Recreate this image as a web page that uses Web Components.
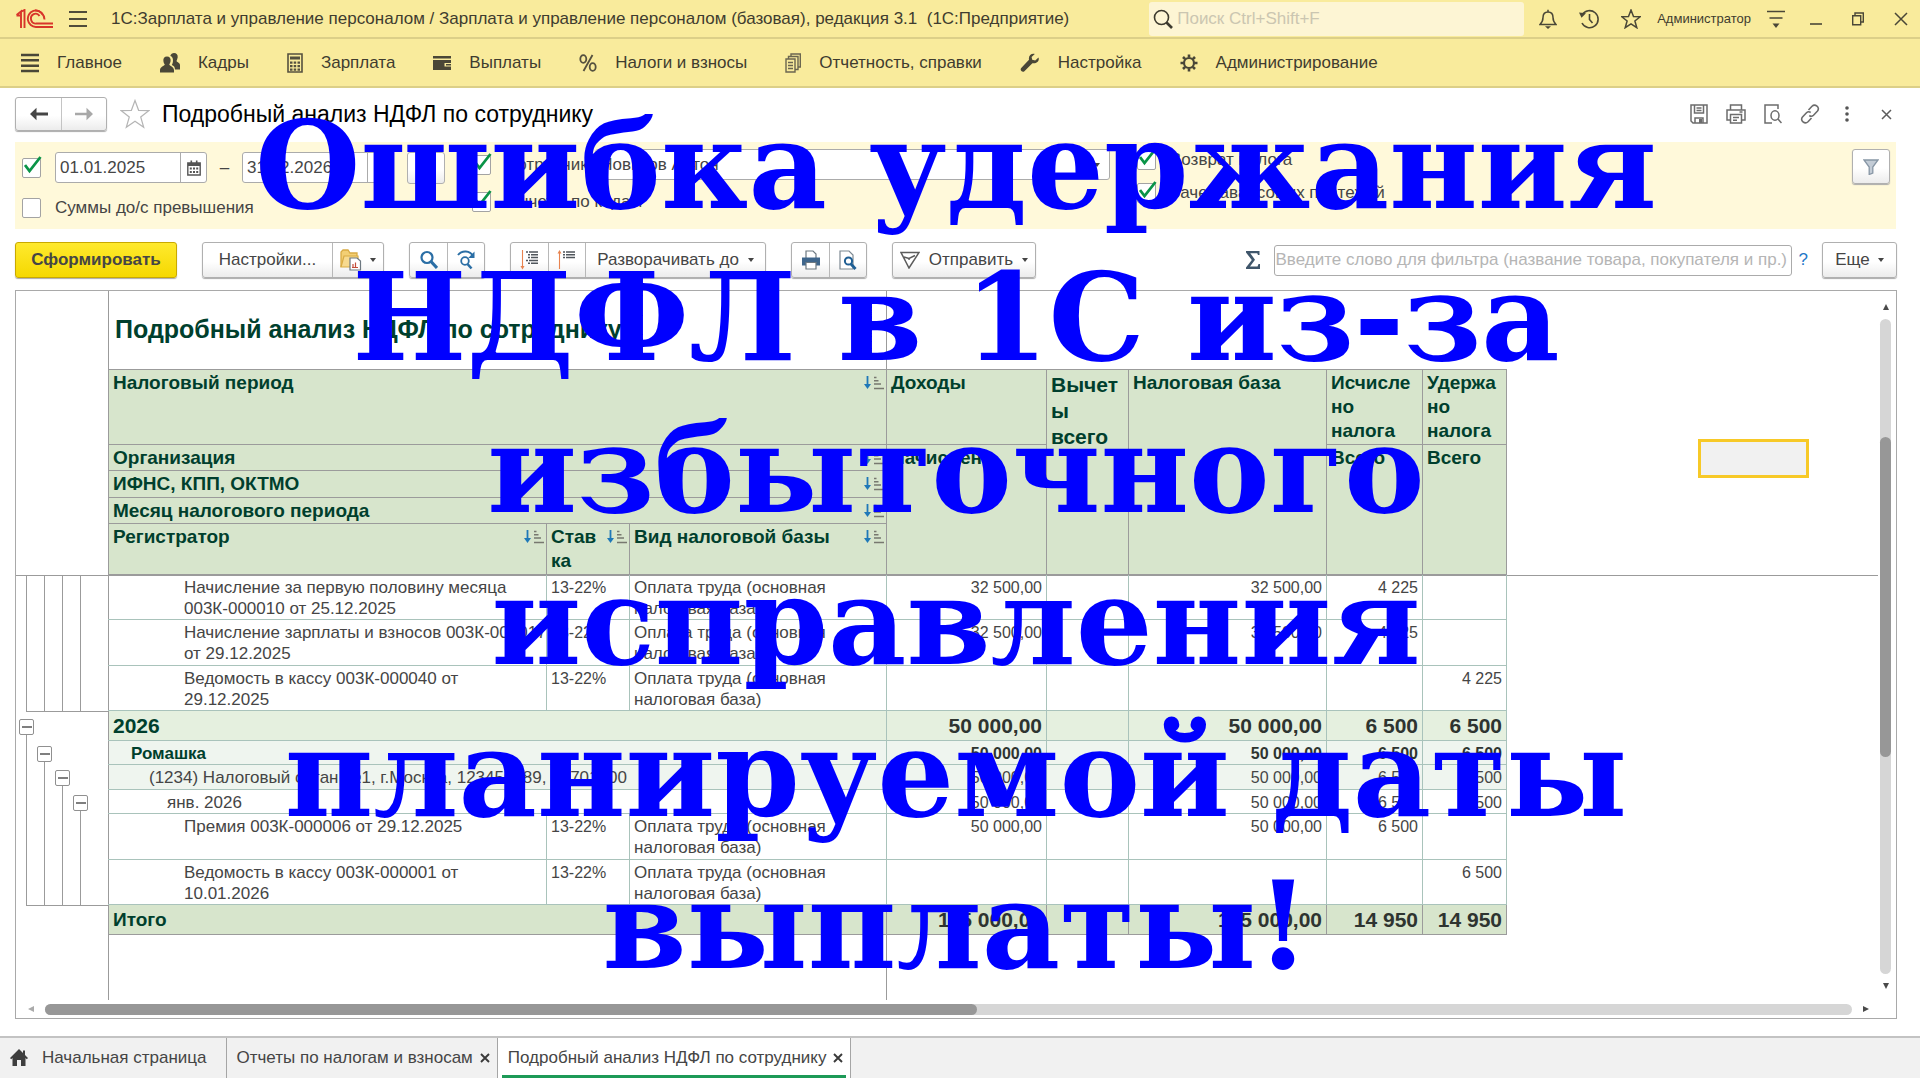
<!DOCTYPE html>
<html lang="ru">
<head>
<meta charset="utf-8">
<title>Зарплата и управление персоналом</title>
<style>
html,body{margin:0;height:100%}
body{font:17px/20px "Liberation Sans",Arial,sans-serif;color:#454545;background:#fff}
</style>
</head>
<body>
<payroll-app></payroll-app>
<script>
const ICONS={
logo:[38,20,'<g fill="none" stroke="#d8352a" stroke-width="1.900"><path d="M.5 6l4.500-3.500v16.500M4 6.500h-3.500M8.500 19V1L4.500 3"/><path d="M27 6A8 8.300 0 1 0 20 18H37"/><path d="M23.500 7A4.600 5 0 1 0 20.500 14.500H37"/><path d="M28.500 10.500A9 9.500 0 0 0 19 1.500"/></g>'],
burger:[18,18,'<path d="M0 2h18M0 9h18M0 16h18" stroke="#504c3a" stroke-width="1.800"/>'],
list:[18,20,'<path d="M0 2h18M0 7.300h18M0 12.700h18M0 18h18" stroke="#4a4737" stroke-width="2.500"/>'],
people:[20,20,'<g fill="#4a4737"><path d="M14 0c2.500 0 4 1.800 3.700 4.300-.2 1.500-.8 2.600-1.200 3.700 0 1 3.500 1.600 3.500 4v4.500h-5c-.2-2.500-1-3.700-3.200-4.500 1.200-1.800 1.400-4.400 1-6.300-.3-1.500-1.200-2.400-2.500-2.700C10.700 1.100 12.400 0 14 0z"/><path d="M7 3.500c2.600 0 4 2 3.600 4.500-.2 1.500-.9 2.500-1.300 3.500.2 1.500 4.700 2.200 4.700 5.500v2.500H0V17c0-3.300 4.500-4 4.800-5.500C4 10.500 3.600 9.500 3.400 8 3 5.500 4.400 3.500 7 3.500z"/></g>'],
calc:[16,20,'<path d="M1 1h14v18H1z" fill="none" stroke="#55513f" stroke-width="1.600"/><path d="M3 3.500h10v3H3zM3 8.500h2.500v2.200H3zm3.700 0h2.500v2.200H6.700zm3.800 0H13v2.200h-2.500zM3 12h2.500v2.200H3zm3.700 0h2.500v2.200H6.700zm3.800 0H13v2.200h-2.500zM3 15.500h2.500v2.200H3zm3.700 0h2.500v2.200H6.700zm3.800 0H13v2.200h-2.500z" fill="#55513f"/>'],
wallet:[18,16,'<path d="M0 1h18v2.500H0zM0 5h18v3h-6.500v3.500H18V15H0z" fill="#4a4737"/><path d="M13 9h5v1.500h-5z" fill="#4a4737"/>'],
percent:[18,18,'<g fill="none" stroke="#55513f" stroke-width="1.800"><ellipse cx="4.300" cy="5" rx="3" ry="3.800"/><ellipse cx="13.700" cy="13" rx="3" ry="3.800"/><path d="M13.500 1L4.500 17"/></g>'],
docs:[16,20,'<g fill="none" stroke="#6b6650" stroke-width="1.400"><path d="M1 6h9v13H1z"/><path d="M3.500 6V3.500H13v13h-3"/><path d="M6 3.500V1h9.300v13H13M3 9.500h5M3 12.500h5M3 15.500h5"/></g>'],
wrench:[20,20,'<path d="M18.500 4.500l-3.300 3-3-.8-.6-2.800 3.200-3C11.500-.1 8.200 2.600 9 6.700L1.200 15c-1.800 2 1.200 5 3.200 3.200l8-8c4 .9 7.400-1.900 6.100-5.700z" fill="#4a4737"/>'],
gear:[18,20,'<g fill="none" stroke="#4a4737"><circle cx="9" cy="10" r="5" stroke-width="2.200"/><path d="M9 1.500v3M9 15.500v3M.5 10h3M14.500 10h3M3 4l2.200 2.200M12.800 13.800L15 16M15 4l-2.200 2.200M5.200 13.800L3 16" stroke-width="2.600"/></g>'],
search:[20,20,'<g fill="none" stroke="#3d3a2e"><circle cx="8.500" cy="8.500" r="7" stroke-width="1.600"/><path d="M13.500 13.500l5.500 5.500" stroke-width="2.600"/></g>'],
bell:[18,20,'<path d="M1 15.500c2-2 3-3.500 3-7C4 5 6 3 9 3s5 2 5 5.500c0 3.500 1 5 3 7zM9 3V.8" fill="none" stroke="#4a4737" stroke-width="1.500"/><path d="M6 17.200h6L9 20z" fill="#4a4737"/>'],
history:[20,20,'<g fill="none" stroke="#4a4737" stroke-width="1.600"><path d="M3.200 6A8.500 8.500 0 1 1 3 14M10.500 5v5.500l3 3.500"/></g><path d="M0 3.500l7 .8-4.500 4.500z" fill="#4a4737"/>'],
star:[20,20,'<path d="M10 1l2.500 6.500 6.700.3-5.300 4.200 1.900 6.700L10 14.900l-5.800 3.800L6.100 12 .8 7.800l6.700-.3z" fill="none" stroke="#4a4737" stroke-width="1.500"/>'],
starbig:[30,30,'<path d="M15 1.500l3.600 9.800 10.400.3-8.300 6.400 3 10.300L15 22.300l-8.700 6 3-10.300L1 11.600l10.400-.3z" fill="#fff" stroke="#b5b5b5" stroke-width="1.200"/>'],
usermenu:[18,18,'<path d="M0 1.500h18M2.500 8h13" stroke="#4a4737" stroke-width="1.700"/><path d="M5.500 13.500h7L9 18z" fill="#4a4737"/>'],
min:[12,16,'<path d="M0 13h12" stroke="#4a4737" stroke-width="1.600"/>'],
restore:[12,14,'<path d="M.7 3.700h8v9h-8zM3 3.500V1h8.300v9H9" fill="none" stroke="#4a4737" stroke-width="1.400"/>'],
close:[14,14,'<path d="M1 1l12 12M13 1L1 13" stroke="#4a4737" stroke-width="1.500"/>'],
closes:[11,11,'<path d="M1 1l9 9M10 1l-9 9" stroke="#5c5c5c" stroke-width="1.500"/>'],
closet:[10,12,'<path d="M1 2l8 8M9 2l-8 8" stroke="#3a3a3a" stroke-width="1.900"/>'],
back:[18,14,'<path d="M0 7l6.500-6.200v4.700H18v3H6.500v4.700z" fill="#454545"/>'],
fwd:[18,14,'<path d="M18 7L11.500.8v4.900H0v2.600h11.500v4.900z" fill="#a8a8a8"/>'],
save:[18,20,'<g fill="none" stroke="#6c6c6c" stroke-width="1.500"><path d="M1 1h16v18H3l-2-2z"/><path d="M4.500 1v8h9V1M5 19v-5h8v5M6.500 4h5M6.500 6.500h5"/></g><path d="M9 15h3v4H9z" fill="#6c6c6c"/>'],
print:[20,20,'<g fill="none" stroke="#6c6c6c" stroke-width="1.500"><path d="M4.500 6V1h11v5M4.500 16H1V6h18v10h-3.500"/><path d="M4.500 10.500h11V19h-11zM7 13.500h6M7 16.200h4M13.500 8h3"/></g>'],
preview:[18,20,'<g fill="none" stroke="#6c6c6c" stroke-width="1.500"><path d="M8 19H1V1h13v4"/><ellipse cx="11" cy="11.500" rx="4" ry="4.700"/><path d="M14 15l3.500 4"/></g>'],
link:[20,20,'<g fill="none" stroke="#6c6c6c" stroke-width="1.600"><path d="M8.500 6l3.500-3.700c3-3 8.500 1 5.500 4.700l-4 4.200c-1.200 1.200-3 1.200-4.200.3M11.500 14L8 17.700c-3 3-8.500-1-5.500-4.700l4-4.200c1.200-1.200 3-1.200 4.200-.3"/></g>'],
dots:[4,18,'<g fill="#555"><circle cx="2" cy="3" r="1.800"/><circle cx="2" cy="9" r="1.800"/><circle cx="2" cy="15" r="1.800"/></g>'],
cal:[14,16,'<path d="M.8 3h12.400v12H.8z" fill="none" stroke="#555" stroke-width="1.400"/><path d="M1 3h12v3H1zM3.500.5h1.600V4H3.500zm5.400 0h1.600V4H8.900zM2.800 7.500h2v2h-2zm3.200 0h2v2H6zm3.200 0h2v2h-2zM2.800 11h2v2h-2zM6 11h2v2H6zm3.200 0h2v2h-2z" fill="#555"/>'],
tri:[6,4,'<path d="M0 0h6L3 4z" fill="#444"/>'],
funnel:[16,16,'<path d="M1 1h14L9.800 8v6l-3.600 1.500V8z" fill="#c3ccd6" stroke="#8796a5" stroke-width="1.300"/>'],
folder:[22,22,'<path d="M1 18V3l2-2h5l2 3h7v3" fill="#f3cf74" stroke="#d9ab43" stroke-width="1.300"/><path d="M1 18L4 7h14v11z" fill="#f7da8f" stroke="#d9ab43" stroke-width="1.200"/><path d="M10 9h7l3.500 3v9H10z" fill="#fff" stroke="#6d7880" stroke-width="1.200"/><path d="M13 18v-3M15.500 18v-4.500M12 18.500h6" stroke="#c34d3a" stroke-width="1.200"/>'],
find:[18,20,'<g fill="none" stroke="#2a6ea5"><circle cx="7" cy="7.500" r="5.500" stroke-width="2.200"/><path d="M11 11.500l6 6.500" stroke-width="3.200"/></g>'],
findnext:[20,20,'<g fill="none" stroke="#2a6ea5"><path d="M2 5c4-5 12-4.500 15 1" stroke-width="2"/><circle cx="9" cy="11" r="3.800" stroke-width="1.800"/><path d="M11.500 14l4 4.500" stroke-width="2.600"/></g><path d="M18.500 1.500V8h-6.300z" fill="#2a6ea5"/>'],
expand:[20,20,'<path d="M2.500 0v17" stroke="#e8834f" stroke-width="1.100"/><path d="M.5 16h4l-2 3.500z" fill="#e8834f"/><path d="M6 2h2M9 2h9M8 4.800h2M11 4.800h7M8 7.600h2M11 7.600h7M6 10.400h2M9 10.400h9M8 13.200h2M11 13.200h7" stroke="#50565c" stroke-width="1.500"/>'],
collapse:[20,20,'<path d="M2.500 2v17" stroke="#e8834f" stroke-width="1.100"/><path d="M.5 3.500h4L2.500 0z" fill="#e8834f"/><path d="M6 2h2M9 2h9M6 4.800h2M9 4.800h9M6 7.600h2M9 7.600h9" stroke="#50565c" stroke-width="1.500"/>'],
printer:[20,20,'<path d="M5 8V1h7l3 3v4" fill="#fff" stroke="#6d7880" stroke-width="1.200"/><path d="M1 7.500h18v8H1z" fill="#3f668c"/><path d="M5 12.500h10V19H5z" fill="#fff" stroke="#6d7880" stroke-width="1.200"/>'],
pageview:[18,20,'<path d="M1 1h9l4 4v14H1z" fill="#fff" stroke="#7d8992" stroke-width="1.200"/><g fill="none" stroke="#1f5f94"><circle cx="9.500" cy="11" r="3.600" stroke-width="2"/><path d="M12 14l4.500 5" stroke-width="2.800"/></g>'],
send:[20,18,'<path d="M1 1.500h18L9 17zM4 6l5 1.500 6-3M9 7.500V9" fill="none" stroke="#5c5c5c" stroke-width="1.500"/>'],
sigma:[14,20,'<path d="M0 1h13.500v4H12l-.8-1.800H4.300L9 9.800 4 16.500h7.500L12.500 14H14v5H0v-1.600L5.800 10 0 2.500z" fill="#3f566b"/>'],
sort:[20,14,'<path d="M3.500 0v9" stroke="#1f78b8" stroke-width="1.800"/><path d="M0 8h7l-3.500 5z" fill="#1f78b8"/><path d="M10 1.500h2.500M10 4.700h4.500M10 8h7M10 12.500h10" stroke="#77786f" stroke-width="1.600"/>'],
home:[18,18,'<path d="M9 0L0 9l1.200 1.200L2.500 9v8H7v-6h4v6h4.500V9l1.300 1.200L18 9l-3-3V1.500h-2V4z" fill="#3e3e3e"/>'],
up:[6,6,'<path d="M0 6l3-6 3 6z" fill="#4a4a4a"/>'],
down:[6,6,'<path d="M0 0l3 6 3-6z" fill="#4a4a4a"/>'],
left:[6,6,'<path d="M6 0L0 3l6 3z" fill="#aaa"/>'],
right:[6,6,'<path d="M0 0l6 3-6 3z" fill="#4a4a4a"/>'],
minus:[10,2,'<path d="M0 1h10" stroke="#555" stroke-width="1.500"/>']
};
const RESET=`*{box-sizing:border-box}button,input{font:inherit;color:inherit;margin:0}button{cursor:pointer}a{color:inherit;text-decoration:none}`;
function define(name,css,html){
  const t=document.createElement('template');
  t.innerHTML=`<style>${RESET}${css}</style>${html}`;
  customElements.define(name,class extends HTMLElement{
    constructor(){super();this.attachShadow({mode:'open'}).append(t.content.cloneNode(true));}
  });
}
customElements.define('ui-icon',class extends HTMLElement{
  connectedCallback(){
    if(this.shadowRoot)return;
    const [w,h,body]=ICONS[this.getAttribute('name')];
    this.attachShadow({mode:'open'}).innerHTML=`<style>:host{display:inline-flex;flex:none}svg{display:block}</style><svg width="${w}" height="${h}" viewBox="0 0 ${w} ${h}" aria-hidden="true">${body}</svg>`;
  }
});
customElements.define('ui-check',class extends HTMLElement{
  connectedCallback(){
    if(this.shadowRoot)return;
    const on=this.hasAttribute('checked')?'checked':'';
    const name=this.getAttribute('name');
    this.attachShadow({mode:'open'}).innerHTML=`<style>${RESET}
    :host{display:inline-flex}
    label{display:flex;align-items:center;gap:14px;white-space:nowrap}
    .box{position:relative;display:flex;width:19px;height:20px}
    input{appearance:none;width:19px;height:20px;border:1px solid #a3a3a3;border-radius:2px;background:#fff}
    svg{position:absolute;left:2px;bottom:4px;pointer-events:none;display:none}
    input:checked+svg{display:block}</style>
    <label><span class="box"><input type="checkbox" ${on} ${name?`aria-label="${name}"`:''}><svg width="18" height="18" viewBox="0 0 18 18"><path d="M1 9l4.500 6L16.500 1" fill="none" stroke="#0a9447" stroke-width="2.800"/></svg></span><slot></slot></label>`;
  }
});
define('ui-group',`
:host{display:inline-flex;height:36px;flex:none;border:1px solid #b0b0b0;border-radius:3px;background:linear-gradient(#fff 55%,#ececec);box-shadow:0 1px 1px #aaa}
::slotted(button){border:0;background:none;padding:0 7px;font:inherit;color:inherit;display:flex;align-items:center;justify-content:center;gap:8px;min-width:37px;white-space:nowrap;cursor:pointer}
::slotted(button:not(:first-child)){border-left:1px solid #b8b8b8!important}
`,`<slot></slot>`);

define('title-bar',`
:host{display:flex;align-items:center;height:39px;padding:0 12px 0 16px;background:#f9eb9c;border-bottom:2px solid #dccf88;color:#3f3c2f}
.logo{margin-right:15px;display:flex}
.burger{margin-right:24px}
button{border:0;background:none;padding:0;display:flex}
h1{font:inherit;margin:0;white-space:pre;flex:1}
label{display:flex;align-items:center;gap:4px;width:375px;height:34px;padding:0 4px;background:#fdf5d4;border-radius:3px;margin-right:15px}
input{border:0;background:none;flex:1;min-width:0;padding:0;outline:0}
input::placeholder{color:#cbc6b1;opacity:1}
nav{display:flex;align-items:center;gap:22px}
.user{font-size:13px;margin:0 -6px}
.win{display:flex;align-items:center;gap:30px;margin-left:3px}
`,`<span class="logo"><ui-icon name="logo"></ui-icon></span><button class="burger" aria-label="Меню"><ui-icon name="burger"></ui-icon></button>
<h1>1С:Зарплата и управление персоналом / Зарплата и управление персоналом (базовая), редакция 3.1  (1С:Предприятие)</h1>
<label><ui-icon name="search"></ui-icon><input type="search" placeholder="Поиск Ctrl+Shift+F" aria-label="Поиск"></label>
<nav><button aria-label="Уведомления"><ui-icon name="bell"></ui-icon></button><button aria-label="История"><ui-icon name="history"></ui-icon></button><button aria-label="Избранное"><ui-icon name="star"></ui-icon></button><a class="user" href="#">Администратор</a><button aria-label="Сервис"><ui-icon name="usermenu"></ui-icon></button>
<span class="win"><button aria-label="Свернуть"><ui-icon name="min"></ui-icon></button><button aria-label="Развернуть"><ui-icon name="restore"></ui-icon></button><button aria-label="Закрыть"><ui-icon name="close"></ui-icon></button></span></nav>`);

const SECTIONS=[['list','Главное'],['people','Кадры'],['calc','Зарплата'],['wallet','Выплаты'],['percent','Налоги и взносы'],['docs','Отчетность, справки'],['wrench','Настройка'],['gear','Администрирование']];
define('section-menu',`
:host{display:block;background:#f9eb9c;border-bottom:2px solid #dccf88;color:#3f3c2f}
nav{display:flex;gap:38px;height:47px;padding:0 21px;align-items:center}
a{display:flex;align-items:center;gap:18px;white-space:nowrap}
`,`<nav>${SECTIONS.map(([i,t])=>`<a href="#"><ui-icon name="${i}"></ui-icon>${t}</a>`).join('')}</nav>`);

define('form-header',`
:host{display:flex;align-items:center;height:54px;padding:0 28px 2px 15px}
.nav{display:flex;height:34px;border:1px solid #b0b0b0;border-radius:3px;background:linear-gradient(#fff 55%,#ececec);box-shadow:0 1px 1px #aaa;margin-right:13px}
.nav button{width:45px;justify-content:center;align-items:center}
.nav button+button{border-left:1px solid #c4c4c4}
button{border:0;background:none;padding:0;display:flex}
h2{font-size:23px;line-height:26px;font-weight:400;color:#000;margin:0 auto 0 12px}
.tools{display:flex;align-items:center;gap:18px}
.tools .d{margin:0 7px}
.tools .x{margin-left:7px}
`,`<div class="nav"><button aria-label="Назад"><ui-icon name="back"></ui-icon></button><button aria-label="Вперед"><ui-icon name="fwd"></ui-icon></button></div>
<button aria-label="В избранное"><ui-icon name="starbig"></ui-icon></button>
<h2>Подробный анализ НДФЛ по сотруднику</h2>
<div class="tools"><button aria-label="Сохранить"><ui-icon name="save"></ui-icon></button><button aria-label="Печать"><ui-icon name="print"></ui-icon></button><button aria-label="Просмотр"><ui-icon name="preview"></ui-icon></button><button aria-label="Ссылка"><ui-icon name="link"></ui-icon></button><button class="d" aria-label="Еще"><ui-icon name="dots"></ui-icon></button><button class="x" aria-label="Закрыть"><ui-icon name="closes"></ui-icon></button></div>`);

define('filter-panel',`
:host{display:flex;align-items:flex-start;margin:0 24px 0 15px;padding:7px 6px 6px 7px;background:#fff9da}
.a{display:grid;gap:9px;padding-top:3px;width:450px}
.r{display:flex;align-items:center;height:31px}
.a ui-check.f{margin-right:14px}
.b{display:grid;gap:6px;width:638px;margin-right:27px}
.b .r{gap:3px}
.c{display:grid;gap:11px}
.c .r{height:22px}
.in{display:flex;height:31px;border:1px solid #ababab;border-radius:3px;background:#fff}
.in input{border:0;background:none;padding:0 4px;min-width:0;flex:1;outline:0}
.in button{border:0;border-left:1px solid #ababab;background:none;width:26px;padding:0;display:flex;align-items:center;justify-content:center}
.d{width:152px}.s{flex:1}
.dash{width:35px;text-align:center}
.dots{width:38px;height:32px;margin-left:13px;border:1px solid #b0b0b0;border-radius:3px;background:linear-gradient(#fff 55%,#ececec)}
.fun{margin-left:auto;width:38px;height:35px;border:1px solid #b0b0b0;border-radius:3px;background:linear-gradient(#fff 55%,#ececec);box-shadow:0 1px 1px #aaa;display:flex;align-items:center;justify-content:center;padding:0}
`,`<div class="a"><div class="r"><ui-check class="f" checked name="Период"></ui-check><span class="in d"><input type="text" value="01.01.2025" aria-label="Начало периода"><button aria-label="Календарь"><ui-icon name="cal"></ui-icon></button></span><span class="dash">–</span><span class="in d"><input type="text" value="31.12.2026" aria-label="Конец периода"><button aria-label="Календарь"><ui-icon name="cal"></ui-icon></button></span><button class="dots" aria-label="Выбрать период">...</button></div>
<div class="r"><ui-check>Суммы до/с превышения</ui-check></div></div>
<div class="b"><div class="r"><ui-check checked>Сотрудник:</ui-check><span class="in s"><input type="text" value="Новиков Антон" aria-label="Сотрудник"><button aria-label="Выбрать"><ui-icon name="tri"></ui-icon></button></span></div><div class="r"><ui-check checked>Вычеты по кодам</ui-check></div></div>
<div class="c"><div class="r"><ui-check checked>Возврат налога</ui-check></div><div class="r"><ui-check checked>Зачет авансовых платежей</ui-check></div></div>
<button class="fun" aria-label="Фильтр"><ui-icon name="funnel"></ui-icon></button>`);

define('report-toolbar',`
:host{display:flex;align-items:center;gap:25px;padding:13px 23px 12px 15px}
.go{height:36px;width:162px;flex:none;border:1px solid #c9a900;border-radius:3px;background:linear-gradient(#ffe92e,#f5d800);box-shadow:0 1px 1px #aaa;font-weight:700;padding:0}
.set{width:129px}
.exp{width:180px;gap:9px}
.send{width:142px;gap:9px}
.fill{flex:1}
.flt{display:flex;align-items:center;gap:14px;margin-right:-11px}
.flt input{width:518px;height:31px;border:1px solid #ababab;border-radius:3px;padding:0 1px;outline:0}
.flt input::placeholder{color:#b5b5b5;opacity:1}
.q{color:#1f78c8;margin-left:-7px}
.more{width:73px}
`,`<button class="go">Сформировать</button>
<ui-group><button class="set">Настройки...</button><button><ui-icon name="folder"></ui-icon><ui-icon name="tri"></ui-icon></button></ui-group>
<ui-group><button aria-label="Найти"><ui-icon name="find"></ui-icon></button><button aria-label="Найти далее"><ui-icon name="findnext"></ui-icon></button></ui-group>
<ui-group><button aria-label="Развернуть"><ui-icon name="expand"></ui-icon></button><button aria-label="Свернуть"><ui-icon name="collapse"></ui-icon></button><button class="exp">Разворачивать до<ui-icon name="tri"></ui-icon></button></ui-group>
<ui-group><button aria-label="Печать"><ui-icon name="printer"></ui-icon></button><button aria-label="Предварительный просмотр"><ui-icon name="pageview"></ui-icon></button></ui-group>
<ui-group><button class="send"><ui-icon name="send"></ui-icon>Отправить<ui-icon name="tri"></ui-icon></button></ui-group>
<span class="fill"></span>
<span class="flt"><ui-icon name="sigma"></ui-icon><input type="text" aria-label="Фильтр" placeholder="Введите слово для фильтра (название товара, покупателя и пр.)"><a class="q" href="#">?</a></span>
<ui-group><button class="more">Еще<ui-icon name="tri"></ui-icon></button></ui-group>`);

const S='<ui-icon class="s" name="sort"></ui-icon>';
const K='Оплата труда (основная налоговая база)';
const doc=(h,t,a,b,c,d)=>`<tr style="height:${h}px"><td class="k l4">${t}</td><td>13-22%</td><td class="k">${K}</td><td class="n">${a}</td><td></td><td class="n">${b}</td><td class="n">${c}</td><td class="n">${d}</td></tr>`;
const sum=(h,cls,lv,t,v)=>`<tr class="${cls}" style="height:${h}px"><td colspan="3" class="k ${lv}">${t}</td><td class="n">${v[0]}</td><td></td><td class="n">${v[0]}</td><td class="n">${v[1]}</td><td class="n">${v[2]}</td></tr>`;
const V=['50 000,00','6 500','6 500'];
const tree=(h,n,btn,end)=>`<div class="t${end?' end':''}${h==30?' big':''}" style="height:${h}px">${[0,1,2,3].map(i=>i===btn?'<span><button aria-label="Свернуть группу"><ui-icon name="minus"></ui-icon></button><i></i></span>':i<n?'<span class="v"></span>':'<span></span>').join('')}</div>`;
define('report-sheet',`
:host{display:grid;grid-template-columns:92px 1fr 18px;grid-template-rows:1fr 18px;flex:1;margin:0 23px 0 15px;border:1px solid #a9a9a9;min-height:0}
.gut{grid-area:1/1}
.gut .top{height:285px;border-bottom:1px solid #9b9b9b}
.t{display:grid;grid-template-columns:18px 18px 18px 27px;padding-left:10px}
.t.end{background:linear-gradient(#9b9b9b,#9b9b9b) 10px 100%/100% 1px no-repeat}
.t span{display:flex;flex-direction:column}
.t .v{border-left:1px solid #9b9b9b}
.t button{margin:4px 0 0 -7px;width:15px;height:16px;flex:none;border:1px solid #909090;border-radius:2px;background:#fff;padding:0;display:flex;align-items:center;justify-content:center}
.t.big button{margin-top:7px}
.t i{flex:1;border-left:1px solid #9b9b9b}
.cv{grid-area:1/2;position:relative;overflow:hidden;background:linear-gradient(#9b9b9b,#9b9b9b) 0 0/1px 100% no-repeat,linear-gradient(#9b9b9b,#9b9b9b) 778px 0/1px 100% no-repeat,linear-gradient(#9b9b9b,#9b9b9b) 0 284px/100% 1px no-repeat}
h3{margin:0;height:78px;padding:23px 0 0 7px;font-size:25px;line-height:30px;color:#003f2d}
table{border-collapse:collapse;table-layout:fixed;width:1398px;font-size:16px;line-height:21px;color:#454545}
th,td{text-align:left;vertical-align:top;padding:1px 3px 0 4px;border:1px solid #a9c3bb;overflow:hidden}
td{padding-top:2px}
tbody td:first-child,thead th:first-child{border-left-color:#9b9b9b}
thead th{border-color:#9b9b9b;background:#d7e5cc;color:#003f2d;font-size:19px;line-height:24px;position:relative;white-space:nowrap}
th.big{font-size:21px;line-height:26px;padding-top:2px}
.s{position:absolute;right:2px;top:6px}
.k{font-size:17px}
td.n{text-align:right;white-space:nowrap;padding-right:4px}
.l1{padding-left:22px}.l2{padding-left:40px}.l3{padding-left:58px}
td.l4{padding-left:75px;padding-right:0;white-space:nowrap}
tr.y td,tr.z td{font-weight:700;font-size:21px;line-height:26px;color:#2e3430}
tr.y td{background:#e5f0df}
tr.o td{background:#eff5ef;font-weight:700;color:#2e3430}
tr.p td{background:#eff5ef}
tr.z td{background:#d7e5cc;border-color:#9b9b9b}
tr.o td:first-child,tr.y td:first-child,tr.z td:first-child{color:#003f2d}
tr.z td:first-child{font-size:19px}
.sel{position:absolute;left:1590px;top:148px;width:111px;height:39px;border:3px solid #f7c927;background:#f1f1f1}
.vs{grid-area:1/3;display:flex;flex-direction:column;align-items:center;gap:9px;padding:13px 3px 11px 0}
.vs b{flex:1;width:11px;border-radius:6px;background:#d6d6d6;display:flex;flex-direction:column;padding-top:118px}
.vs b i{height:320px;border-radius:6px;background:#979797}
.hs{grid-area:2/1/3/4;display:flex;align-items:center;gap:11px;padding:0 27px 0 12px}
.hs b{flex:1;height:11px;border-radius:6px;background:#d6d6d6;display:flex}
.hs b i{width:932px;border-radius:6px;background:#979797}
`,`<div class="gut"><div class="top"></div>${tree(45,4)}${tree(46,4)}${tree(45,4,-1,1)}${tree(30,0,0)}${tree(24,1,1)}${tree(25,2,2)}${tree(24,3,3)}${tree(46,4)}${tree(45,4,-1,1)}</div>
<div class="cv"><h3>Подробный анализ НДФЛ по сотруднику</h3>
<table><colgroup><col style="width:438px"><col style="width:83px"><col style="width:257px"><col style="width:160px"><col style="width:82px"><col style="width:198px"><col style="width:96px"><col style="width:84px"></colgroup>
<thead><tr style="height:75px"><th colspan="3">Налоговый период${S}</th><th>Доходы</th><th rowspan="5" class="big">Вычет<br>ы<br>всего</th><th rowspan="5">Налоговая база</th><th>Исчисле<br>но<br>налога</th><th>Удержа<br>но<br>налога</th></tr>
<tr style="height:26px"><th colspan="3">Организация${S}</th><th rowspan="4">Начислено</th><th rowspan="4">Всего</th><th rowspan="4">Всего</th></tr>
<tr style="height:27px"><th colspan="3">ИФНС, КПП, ОКТМО${S}</th></tr>
<tr style="height:26px"><th colspan="3">Месяц налогового периода${S}</th></tr>
<tr style="height:51px"><th>Регистратор${S}</th><th>Став<br>ка${S}</th><th>Вид налоговой базы${S}</th></tr></thead>
<tbody>${doc(45,'Начисление за первую половину месяца<br>003К-000010 от 25.12.2025','32 500,00','32 500,00','4 225','')}
${doc(46,'Начисление зарплаты и взносов 003К-000017<br>от 29.12.2025','32 500,00','32 500,00','4 225','')}
${doc(45,'Ведомость в кассу 003К-000040 от<br>29.12.2025','','','','4 225')}
${sum(30,'y','','2026',V)}${sum(24,'o','l1','Ромашка',V)}${sum(25,'p','l2','(1234) Налоговый орган №1, г.Москва, 123456789, 65701000',V)}${sum(24,'','l3','янв. 2026',V)}
${doc(46,'Премия 003К-000006 от 29.12.2025','50 000,00','50 000,00','6 500','')}
${doc(45,'Ведомость в кассу 003К-000001 от<br>10.01.2026','','','','6 500')}
${sum(30,'z','','Итого',['115 000,00','14 950','14 950'])}</tbody></table>
<div class="sel"></div></div>
<div class="vs"><ui-icon name="up"></ui-icon><b><i></i></b><ui-icon name="down"></ui-icon></div>
<div class="hs"><ui-icon name="left"></ui-icon><b><i></i></b><ui-icon name="right"></ui-icon></div>`);

define('window-tabs',`
:host{display:flex;height:42px;margin-top:17px;background:#f1f1f1;border-top:2px solid #c3c3c3;flex:none}
div{display:flex;align-items:center;gap:7px;padding:0 7px 0 10px;border-right:1px solid #a5a5a5;white-space:nowrap}
.h{padding-right:19px}.h a{display:flex;gap:14px;align-items:center}
.on{background:linear-gradient(#1d9a57,#1d9a57) 50% 100%/calc(100% - 8px) 3px no-repeat #fff}
button{border:0;background:none;padding:0;display:flex}
`,`<div class="h"><a href="#"><ui-icon name="home"></ui-icon>Начальная страница</a></div>
<div><a href="#">Отчеты по налогам и взносам</a><button aria-label="Закрыть вкладку"><ui-icon name="closet"></ui-icon></button></div>
<div class="on"><a href="#">Подробный анализ НДФЛ по сотруднику</a><button aria-label="Закрыть вкладку"><ui-icon name="closet"></ui-icon></button></div>`);

define('video-caption',`
:host{position:absolute;left:0;right:8px;top:90px;pointer-events:none;text-align:center;color:#00f;font:700 121px/152px "DejaVu Serif",serif}
span{display:block;white-space:nowrap}
`,`<span>Ошибка удержания</span><span>НДФЛ в 1С из-за</span><span>избыточного</span><span>исправления</span><span>планируемой даты</span><span>выплаты!</span>`);

define('payroll-app',`
:host{display:flex;flex-direction:column;height:100%;min-height:900px;position:relative;overflow:hidden}
`,`<title-bar></title-bar><section-menu></section-menu><form-header></form-header><filter-panel></filter-panel><report-toolbar></report-toolbar><report-sheet></report-sheet><window-tabs></window-tabs><video-caption></video-caption>`);
</script>
</body>
</html>
